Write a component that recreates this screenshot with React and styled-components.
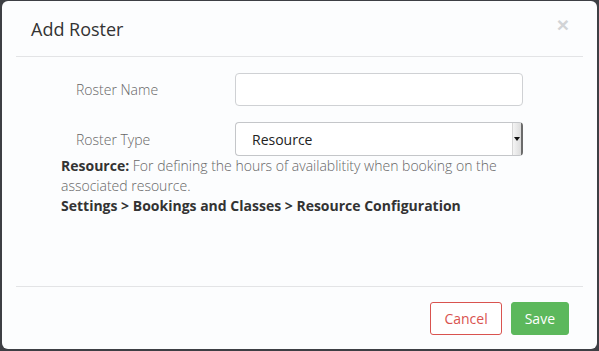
import React from 'react';
import styled, { createGlobalStyle } from 'styled-components';

const GlobalStyle = createGlobalStyle`
  html, body {
    margin: 0;
    padding: 0;
    background: #3d3f44;
    font-family: 'Open Sans', 'Liberation Sans', sans-serif;
  }
  * {
    box-sizing: border-box;
  }
`;

const Backdrop = styled.div`
  width: 599px;
  height: 351px;
  padding: 1px 2px 2px 2px;
  overflow: hidden;
`;

const Modal = styled.div`
  height: 348px;
  background: #fcfdfe;
  border-radius: 6px;
  display: flex;
  flex-direction: column;
`;

const Header = styled.div`
  margin: 0 14px;
  height: 56px;
  padding: 0 15px;
  border-bottom: 1px solid #e3e4e6;
  display: flex;
  align-items: center;
  justify-content: space-between;
`;

const Title = styled.h4`
  margin: 0;
  font-size: 18px;
  font-weight: 400;
  color: #333;
  line-height: 26px;
`;

const Close = styled.span`
  font-size: 21px;
  font-weight: 700;
  color: #d2d4d6;
  line-height: 1;
  margin-top: -8px;
  margin-right: -1px;
  font-family: 'Liberation Sans', sans-serif;
`;

const Body = styled.div`
  flex: 1;
  padding: 16px 59px 0 59px;
`;

const FormRow = styled.div`
  display: grid;
  grid-template-columns: 159px 1fr;
  align-items: center;
  margin-bottom: ${p => (p.$tight ? '0' : '16px')};
`;

const Label = styled.label`
  padding-left: 15px;
  font-size: 14px;
  font-weight: 300;
  color: #666;
`;

const Field = styled.div`
  padding: 0 15px;
`;

const Input = styled.input`
  display: block;
  width: 288px;
  height: 33px;
  border: 1px solid #cfd1d4;
  border-radius: 4px;
  background: #fff;
  outline: none;
`;

const Select = styled.div`
  position: relative;
  width: 288px;
  height: 34px;
  border: 1px solid #c4c6c9;
  border-right: 2px solid #6b6b6b;
  border-radius: 4px;
  background: #fff;
  display: flex;
  align-items: center;
  padding-left: 16px;
  font-size: 14px;
  color: #222;
`;

const SelectArrow = styled.span`
  position: absolute;
  top: 0;
  right: 0;
  bottom: 0;
  width: 9px;
  background: linear-gradient(to right, #f4f4f4, #dcdcdc);
  border-left: 1px solid #d6d6d6;
  display: flex;
  align-items: center;
  justify-content: center;

  &::after {
    content: '';
    border-left: 3px solid transparent;
    border-right: 3px solid transparent;
    border-top: 4px solid #111;
  }
`;

const Help = styled.p`
  margin: 0;
  font-size: 14px;
  font-weight: 300;
  line-height: 20px;
  color: #666;
`;

const Strong = styled.strong`
  font-weight: 700;
  color: #333;
`;

const Footer = styled.div`
  margin: 0 14px;
  padding: 15px 14px 14px 0;
  border-top: 1px solid #e3e4e6;
  display: flex;
  justify-content: flex-end;
  gap: 9px;
`;

const Button = styled.button`
  height: 33px;
  padding: 0 13px;
  font-family: inherit;
  font-size: 14px;
  border-radius: 3px;
  border: 1px solid ${p => (p.$primary ? '#5cb85c' : '#d9534f')};
  background: ${p => (p.$primary ? '#5cb85c' : '#fff')};
  color: ${p => (p.$primary ? '#fff' : '#d9534f')};
  cursor: pointer;
`;

export default function App() {
  return (
    <>
      <GlobalStyle />
      <Backdrop>
        <Modal>
          <Header>
            <Title>Add Roster</Title>
            <Close>×</Close>
          </Header>
          <Body>
            <FormRow>
              <Label>Roster Name</Label>
              <Field>
                <Input type="text" />
              </Field>
            </FormRow>
            <FormRow $tight>
              <Label>Roster Type</Label>
              <Field>
                <Select>
                  Resource
                  <SelectArrow />
                </Select>
              </Field>
            </FormRow>
            <Help>
              <Strong>Resource:</Strong> For defining the hours of availablitity when booking on the
              associated resource.
            </Help>
            <Help>
              <Strong>Settings &gt; Bookings and Classes &gt; Resource Configuration</Strong>
            </Help>
          </Body>
          <Footer>
            <Button>Cancel</Button>
            <Button $primary>Save</Button>
          </Footer>
        </Modal>
      </Backdrop>
    </>
  );
}
